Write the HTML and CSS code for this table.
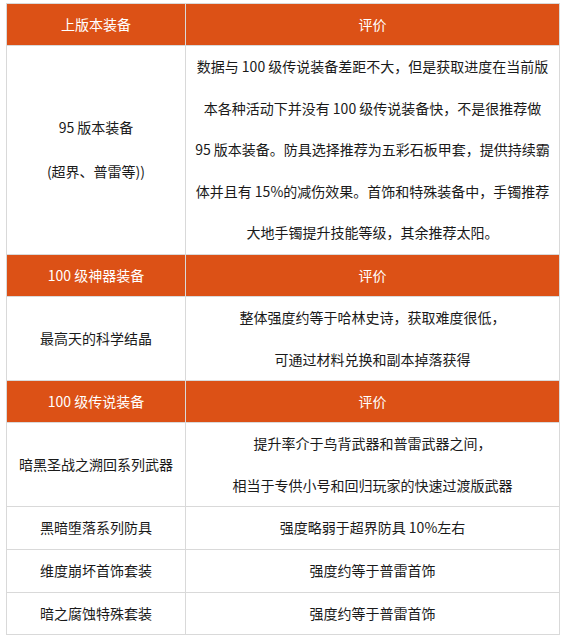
FILE: index.html
```html
<!DOCTYPE html>
<html lang="zh-CN">
<head>
<meta charset="utf-8">
<title>装备推荐</title>
<link rel="stylesheet" href="styles.css">
</head>
<body>
<table class="gear">
  <colgroup><col class="c1"><col class="c2"></colgroup>
  <tr class="head"><td>上版本装备</td><td>评价</td></tr>
  <tr>
    <td><p class="gap">95 版本装备</p><p>(超界、普雷等))</p></td>
    <td>数据与 100 级传说装备差距不大，但是获取进度在当前版<br>本各种活动下并没有 100 级传说装备快，不是很推荐做<br>95 版本装备。防具选择推荐为五彩石板甲套，提供持续霸<br>体并且有 15%的减伤效果。首饰和特殊装备中，手镯推荐<br>大地手镯提升技能等级，其余推荐太阳。</td>
  </tr>
  <tr class="head"><td>100 级神器装备</td><td>评价</td></tr>
  <tr>
    <td>最高天的科学结晶</td>
    <td><p>整体强度约等于哈林史诗，获取难度很低，</p><p>可通过材料兑换和副本掉落获得</p></td>
  </tr>
  <tr class="head"><td>100 级传说装备</td><td>评价</td></tr>
  <tr>
    <td>暗黑圣战之溯回系列武器</td>
    <td><p>提升率介于鸟背武器和普雷武器之间，</p><p>相当于专供小号和回归玩家的快速过渡版武器</p></td>
  </tr>
  <tr><td>黑暗堕落系列防具</td><td>强度略弱于超界防具 10%左右</td></tr>
  <tr><td>维度崩坏首饰套装</td><td>强度约等于普雷首饰</td></tr>
  <tr><td>暗之腐蚀特殊套装</td><td>强度约等于普雷首饰</td></tr>
</table>
</body>
</html>
```
FILE: styles.css
```css
html, body {
  margin: 0;
  background: #ffffff;
}
body {
  padding: 3px 0 0 6px;
  font-family: "Noto Sans CJK SC", "Microsoft YaHei", sans-serif;
  font-size: 14px;
  color: #1a1a1a;
}
.gear {
  width: 553px;
  border-collapse: collapse;
  table-layout: fixed;
}
.c1 { width: 179px; }
.c2 { width: 374px; }
.gear td {
  border: 1px solid #d9d9d9;
  padding: 0;
  line-height: 41.6px;
  text-align: center;
  vertical-align: middle;
  white-space: nowrap;
}
.gear p {
  margin: 0;
}
.gear p.gap {
  margin-bottom: 3px;
}
.gear .head td {
  background: #dc5116;
  color: #ffffff;
  line-height: 41px;
}
```
